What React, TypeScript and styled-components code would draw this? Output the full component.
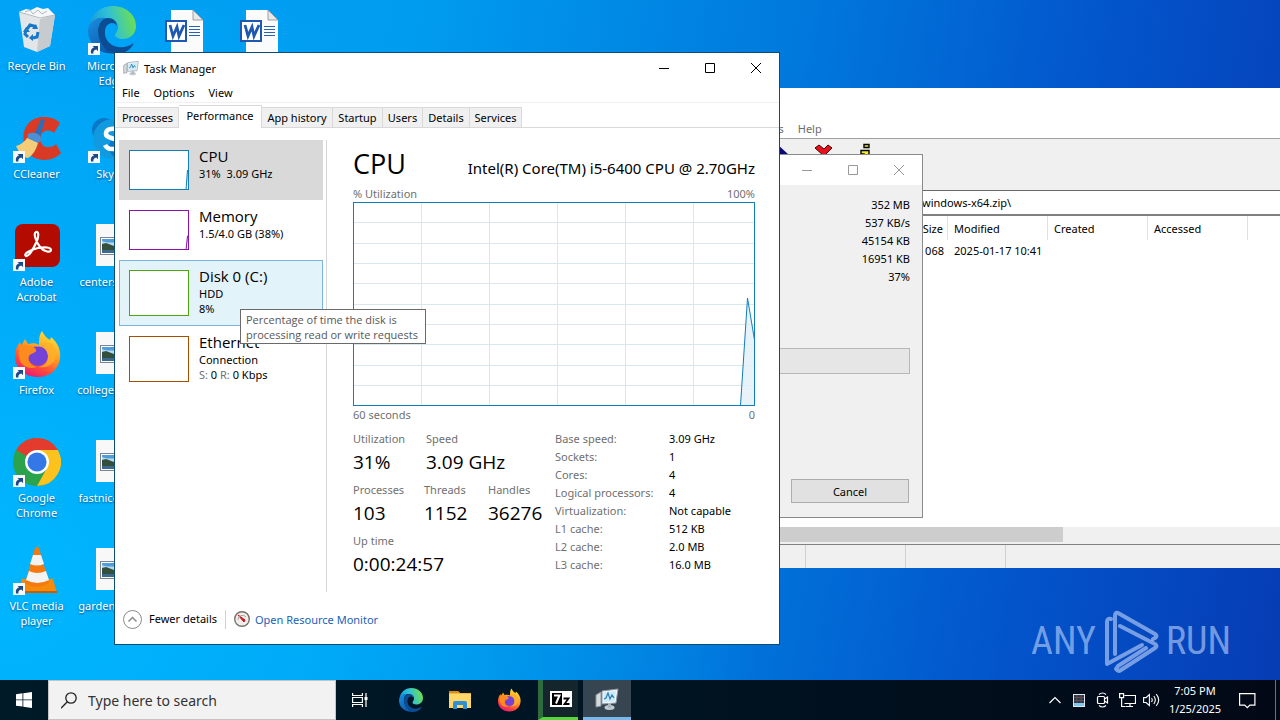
import React from 'react';
import styled, { createGlobalStyle, css } from 'styled-components';

const GlobalStyle = createGlobalStyle`
  * { box-sizing: border-box; }
  body { margin: 0; font-family: "Noto Sans", "Open Sans", sans-serif; font-size: 11px; color: #000; overflow: hidden; }
  button { font: inherit; color: inherit; border: 0; padding: 0; background: none; }
  svg { display: block; flex: none; }
  dl, dd, dt, h1, h2, p, ul { margin: 0; padding: 0; font-weight: 400; }
`;

/* ---------- desktop ---------- */

const Screen = styled.div`
  display: flex;
  flex-direction: column;
  min-height: 100vh;
`;

const Desktop = styled.main`
  position: relative;
  flex: 1;
  background:
    radial-gradient(ellipse 60% 90% at 0% 85%, rgba(0, 184, 255, 0.9), rgba(0, 184, 255, 0) 100%),
    linear-gradient(100deg, #00a2f6 0%, #009cf0 30%, #0078dc 58%, #0354cb 80%, #063cb4 100%);
`;

const IconColumns = styled.div`
  display: flex;
  margin-left: -1px;
`;

const IconColumn = styled.ul`
  display: flex;
  flex-direction: column;
  width: 75px;
  list-style: none;
`;

const ShortcutItem = styled.li`
  display: flex;
  flex-direction: column;
  align-items: center;
  height: 108px;
  padding-top: 6px;
`;

const ShortcutArt = styled.div`
  position: relative;
  height: 52px;
`;

const ShortcutArrow = styled.div`
  position: absolute;
  left: 0;
  bottom: 3px;
`;

const ShortcutLabel = styled.span`
  line-height: 15px;
  text-align: center;
  color: #fff;
  max-width: 74px;
  text-shadow: 0 1px 2px rgba(0, 40, 90, 0.7);
`;

const Watermark = styled.div`
  position: absolute;
  right: 49px;
  bottom: 6px;
  display: flex;
  align-items: center;
  gap: 7px;
  color: rgba(190, 212, 250, 0.62);
  font-family: "Liberation Sans Narrow", "Roboto Condensed", "DejaVu Sans Condensed", sans-serif;
  font-size: 38px;
  line-height: 66px;
`;

/* ---------- windows ---------- */

const TitleBar = styled.header`
  display: flex;
  align-items: center;
  height: 30px;
  background: #fff;
`;

const TitleText = styled.span`
  flex: 1;
  padding-left: 5px;
`;

const CaptionButton = styled.button`
  display: flex;
  align-items: center;
  justify-content: center;
  width: 46px;
  height: 29px;
`;

const CaptionButtons = styled.div<{ $muted?: boolean }>`
  display: flex;
  margin-left: auto;
  color: ${(p) => (p.$muted ? '#999' : '#000')};
`;

const MenuBar = styled.nav<{ $muted?: boolean }>`
  display: flex;
  gap: 14px;
  height: 20px;
  align-items: center;
  color: ${(p) => (p.$muted ? '#6d6d6d' : '#000')};
`;

const ArchiveWindow = styled.section`
  position: absolute;
  left: 740px;
  right: 0;
  top: 88px;
  display: flex;
  flex-direction: column;
  height: 480px;
  background: #fff;
  overflow: hidden;
`;

const ArchiveMenu = styled(MenuBar)`
  padding-left: 17px;
  border-bottom: 1px solid #a0a0a0;
  height: 21px;
`;

const Toolbar = styled.div`
  display: flex;
  gap: 26px;
  height: 51px;
  padding: 4px 0 0 32px;
  background: #f0f0f0;
`;

const AddressBar = styled.div`
  height: 26px;
  padding-left: 182px;
  border-top: 1px solid #696969;
  border-bottom: 2px solid #808080;
  line-height: 24px;
`;

const FileTable = styled.table`
  width: 508px;
  table-layout: fixed;
  border-collapse: separate;
  border-spacing: 0;
  th, td { font-weight: 400; text-align: left; padding: 0 0 0 6px; white-space: nowrap; }
  th { height: 24px; border-right: 1px solid #e0e0e0; }
  td { height: 20px; }
  th:first-child, td:first-child { text-align: right; padding-right: 4px; }
`;

const ScrollTrack = styled.div`
  height: 17px;
  margin-top: auto;
  background: #f0f0f0;
`;

const ScrollThumb = styled.div`
  width: 323px;
  height: 15px;
  background: #cdcdcd;
`;

const StatusBar = styled.footer`
  display: flex;
  height: 24px;
  border-top: 1px solid #808080;
  background: #f0f0f0;
`;

const StatusCell = styled.span<{ $width: number }>`
  width: ${(p) => p.$width}px;
  border-right: 1px solid #d0d0d0;
`;

const ProgressWindow = styled.section`
  position: absolute;
  left: 700px;
  top: 154px;
  display: flex;
  flex-direction: column;
  width: 223px;
  height: 364px;
  border: 1px solid #8a8a8a;
  background: #f0f0f0;
`;

const ProgressValues = styled.ul`
  && { padding: 11px 12px 0 0; }
  list-style: none;
  line-height: 18px;
  text-align: right;
`;

const ProgressTrack = styled.div`
  height: 26px;
  margin: 62px 12px 0 0;
  border: 1px solid #b8b8b8;
  background: #e6e6e6;
`;

const CancelButton = styled.button`
  align-self: flex-end;
  width: 118px;
  height: 24px;
  margin: auto 13px 14px 0;
  border: 1px solid #adadad;
  background: #e1e1e1;
`;

const TaskWindow = styled.section`
  position: absolute;
  left: 114px;
  top: 52px;
  display: flex;
  flex-direction: column;
  width: 666px;
  height: 593px;
  border: 1px solid #0d4c74;
  background: #fff;
`;

const TaskTitle = styled(TitleBar)`
  padding-left: 8px;
`;

const TaskMenu = styled(MenuBar)`
  padding-left: 7px;
  border-bottom: 1px solid #f0f0f0;
`;

const TabStrip = styled.div`
  display: flex;
  align-items: flex-end;
  height: 25px;
  padding-left: 2px;
  border-bottom: 1px solid #d9d9d9;
`;

const Tab = styled.button<{ $width: number; $active?: boolean }>`
  width: ${(p) => p.$width}px;
  height: 20px;
  border: 1px solid #d9d9d9;
  border-left-width: 0;
  border-bottom: 0;
  background: #f0f0f0;
  white-space: nowrap;
  ${(p) => p.$active && css`
    height: 23px;
    margin-bottom: -1px;
    padding-bottom: 3px;
    background: #fff;
  `}
`;

const TaskBody = styled.div`
  display: flex;
  flex: 1;
  padding: 12px 24px 0 4px;
`;

const ResourceList = styled.div`
  width: 208px;
  height: 452px;
  border-right: 1px solid #d6d6d6;
`;

const ResourceItem = styled.button<{ $tall?: boolean; $state?: 'selected' | 'hover' }>`
  display: flex;
  gap: 10px;
  width: 204px;
  height: ${(p) => (p.$tall ? 66 : 60)}px;
  padding: 5px 9px;
  border: 1px solid transparent;
  text-align: left;
  ${(p) => p.$state === 'selected' && css`background: #d9d9d9; border-color: #d9d9d9;`}
  ${(p) => p.$state === 'hover' && css`background: #e3f3fa; border-color: #7ab4e0;`}
`;

const Thumb = styled.svg`
  margin-top: 4px;
  background: #fff;
`;

const ResourceText = styled.span`
  display: flex;
  flex-direction: column;
  line-height: 15px;
  white-space: pre;
`;

const ResourceName = styled.span`
  font-family: "Open Sans", sans-serif;
  font-size: 15px;
  line-height: 20px;
`;

const Muted = styled.span`
  color: #707070;
`;

const Detail = styled.div`
  flex: 1;
  padding-left: 26px;
`;

const DetailHead = styled.div`
  display: flex;
  align-items: baseline;
  justify-content: space-between;
  padding-top: 1px;
`;

const DetailTitle = styled.h1`
  font: 27px/45px "Open Sans", sans-serif;
`;

const DetailModel = styled.h2`
  font-size: 15px;
  line-height: 20px;
`;

const AxisRow = styled.div`
  display: flex;
  justify-content: space-between;
  line-height: 16px;
  color: #707070;
`;

const Chart = styled.svg`
  width: 100%;
  height: 204px;
  margin-bottom: 1px;
`;

const Stats = styled.div`
  display: flex;
  padding-top: 7px;
`;

const StatColumn = styled.div`
  display: flex;
  flex-direction: column;
  width: 202px;
`;

const StatRow = styled.dl`
  display: flex;
  height: 51px;
`;

const Stat = styled.div<{ $width: number }>`
  width: ${(p) => p.$width}px;
  dt { color: #707070; line-height: 18px; }
  dd { font: 19px/28px "Open Sans", sans-serif; white-space: nowrap; }
`;

const Facts = styled.dl`
  display: grid;
  grid-template-columns: 114px auto;
  grid-auto-rows: 18px;
  line-height: 18px;
  dt { color: #707070; }
`;

const TaskFooter = styled.footer`
  display: flex;
  align-items: center;
  height: 50px;
  padding-left: 8px;
`;

const DetailsToggle = styled.button`
  display: flex;
  align-items: center;
  gap: 7px;
  padding-right: 8px;
  margin-right: 8px;
  border-right: 1px solid #d0d0d0;
  line-height: 16px;
`;

const MonitorLink = styled.a`
  display: flex;
  align-items: center;
  gap: 5px;
  color: #1a5fb8;
  text-decoration: none;
`;

const Tooltip = styled.div`
  position: absolute;
  left: 240px;
  top: 309px;
  width: 186px;
  padding: 2px 0 1px 5px;
  border: 1px solid #6a6a6a;
  background: #fff;
  color: #575757;
  font-family: "Open Sans", sans-serif;
  line-height: 15px;
  white-space: pre;
`;

/* ---------- taskbar ---------- */

const Taskbar = styled.footer`
  display: flex;
  height: 40px;
  background: linear-gradient(90deg, #001a28 0%, #001422 50%, #020816 100%);
  color: #fff;
`;

const BarButton = styled.button<{ $open?: boolean }>`
  display: flex;
  align-items: center;
  justify-content: center;
  width: 48px;
  height: 40px;
  margin-right: 1px;
  ${(p) => p.$open && css`
    background: #36454f;
    border-bottom: 3px solid #76b9ed;
  `}
`;

const StartButton = styled(BarButton)`
  margin-right: 0;
`;

const TaskViewButton = styled(BarButton)`
  margin-right: 3px;
`;

const ZipButton = styled(BarButton)`
  width: 40px;
  margin: 0 5px 0 4px;
  border-left: 5px solid #2f6b3c;
  border-bottom: 3px solid #55d83c;
  background: #14262c;
`;

const SearchBox = styled.label`
  display: flex;
  align-items: center;
  gap: 11px;
  width: 288px;
  padding-left: 12px;
  border: 1px solid #c4c4c4;
  background: #f2f2f2;
`;

const SearchInput = styled.input`
  flex: 1;
  min-width: 0;
  border: 0;
  outline: 0;
  padding: 0;
  background: none;
  font: 14px "Noto Sans", sans-serif;
  &::placeholder { color: #333; opacity: 1; }
`;

const Tray = styled.div`
  display: flex;
  align-items: center;
  margin-left: auto;
`;

const TrayButton = styled.button`
  display: flex;
  align-items: center;
  justify-content: center;
  width: 24px;
  height: 40px;
`;

const Clock = styled.time`
  width: 64px;
  line-height: 18px;
  text-align: center;
  white-space: pre-line;
`;

const NoticeButton = styled(TrayButton)`
  width: 40px;
`;

const ShowDesktop = styled.button`
  width: 5px;
  height: 40px;
  margin-left: 8px;
  border-left: 1px solid #6c7480;
`;

/* ---------- drawings ---------- */

const ArrowBadge = () => (
  <svg width="12" height="12" viewBox="0 0 12 12">
    <rect width="12" height="12" fill="#f6f8fb" />
    <path d="M3 10.5C2.4 7.5 3.4 5.3 6 4.6L4.6 3h5.400v5.200L8.400 6.600C6.200 7 5 8.200 5.400 10.500z" fill="#1c4a86" />
  </svg>
);

const BinArt = () => (
  <svg width="48" height="48" viewBox="0 0 48 48">
    <path d="M6 6l36 3-5 31-13 6-13-5z" fill="#e3e6e9" />
    <path d="M27 12l15-3-5 31-13 6z" fill="#c6cbd0" />
    <path d="M6 6l7-3 5 1 6-3 6 2 5-1 7 7-15 4z" fill="#f6f7f8" />
    <path d="M6 6l21 6 15-3M12 6l5-2 3 4 5-4 4 4 5-3" stroke="#b4b9be" fill="none" />
    <g fill="none" stroke="#1877c9" strokeWidth="3">
      <path d="M14 23l3-4 4 1 1 2" /><path d="M25 26l-1 5-4 1" /><path d="M15 31l-3-3 1-4" />
    </g>
    <path d="M19 23h6l-2-5zM20 28v7l-4-3zM10 26l3-5 4 5z" fill="#1877c9" />
  </svg>
);

const EdgeArt = ({ size }: { size: number }) => (
  <svg width={size} height={size} viewBox="0 0 48 48">
    <defs>
      <linearGradient id="edgeTop" x1="0" y1="0.6" x2="1" y2="0.4"><stop offset="0" stopColor="#1599dc" /><stop offset="0.45" stopColor="#2ec0d8" /><stop offset="1" stopColor="#6fe04c" /></linearGradient>
      <linearGradient id="edgeLow" x1="0" y1="0" x2="0.7" y2="1"><stop offset="0" stopColor="#1b8fe0" /><stop offset="1" stopColor="#0b56a8" /></linearGradient>
    </defs>
    <path d="M1 22C2 9 12 0 25 0c13 0 23 9 23 20 0 8-6 13-13 13-5 0-8-2-8-4 0-2 3-3 3-8 0-5-5-9-12-9C9 12 3 16 1 22z" fill="url(#edgeTop)" />
    <path d="M0 24c1-8 8-13 17-12-5 2-7 7-7 12 0 9 6 20 18 23C13 50 0 39 0 24z" fill="url(#edgeLow)" />
    <path d="M17 25c-1 8 5 15 13 16 6 1 11-1 14-3 1-1 2 0 1 1-4 6-10 9-18 9C17 46 10 35 10 25c0-7 4-13 10-13 5 0 9 3 9 8-1-2-3-3-5-3-4 0-7 4-7 8z" fill="#0c4c93" />
  </svg>
);

const WordArt = () => (
  <svg width="48" height="48" viewBox="0 0 48 48">
    <path d="M8 4h22l10 10v34H8z" fill="#fbfbfb" />
    <path d="M30 4v10h10z" fill="#e8e8e8" stroke="#8a8a8a" strokeWidth="0.800" />
    <g stroke="#2b62b0" strokeWidth="1.200"><path d="M26 20.500h11M26 23.500h11M26 26.500h11M26 29.500h11" /></g>
    <rect x="3" y="15" width="20" height="20" fill="#fff" stroke="#1f58b0" strokeWidth="2" />
    <path d="M7 19l3 11 4-9 2 9 5-11" fill="none" stroke="#1f58b0" strokeWidth="2.800" />
  </svg>
);

const CCleanerArt = () => (
  <svg width="48" height="48" viewBox="0 0 48 48">
    <path d="M47 9l-6 10c-4-4-11-3-13 2-2 6 1 13 8 12 3 0 5-1 7-3l5 9C39 49 20 48 14 37 5 20 14 3 30 3c8 0 13 2 17 6z" fill="#d93a26" />
    <path d="M28 5l4 1-5 17-6-2z" fill="#2f6db4" />
    <path d="M15 20c6-3 14 0 13 7l-5 3-9-4z" fill="#4b8fd4" />
    <path d="M3 32c5-1 9-5 11-8l11 5c-2 7-5 12-10 15C9 43 6 38 3 32z" fill="#f5cd78" />
  </svg>
);

const SkypeArt = () => (
  <svg width="48" height="48" viewBox="0 0 48 48">
    <circle cx="16" cy="16" r="12" fill="#0a78c8" /><circle cx="25" cy="25" r="20" fill="#129ae0" /><circle cx="33" cy="33" r="12" fill="#0a78c8" />
    <path d="M32 18c-2-4-13-5-14 1-1 7 14 4 14 11 0 6-12 7-15 1" fill="none" stroke="#fff" strokeWidth="4.500" />
  </svg>
);

const AcrobatArt = () => (
  <svg width="48" height="48" viewBox="0 0 48 48">
    <rect x="2" y="2" width="45" height="43" rx="8" fill="#b30b00" />
    <path d="M23 10c3-1 3 5 0 11-3 7-8 14-10 13-3-2 4-6 12-8 7-1 13-1 13 2 0 3-7 2-11-3-4-5-7-14-4-15z" fill="none" stroke="#fff" strokeWidth="2.200" />
  </svg>
);

const FirefoxArt = ({ size }: { size: number }) => (
  <svg width={size} height={size} viewBox="0 0 48 48">
    <defs>
      <linearGradient id="fox" x1="0.8" y1="0" x2="0.3" y2="1"><stop offset="0" stopColor="#ffe83a" /><stop offset="0.45" stopColor="#ff9a22" /><stop offset="0.75" stopColor="#ff4a3a" /><stop offset="1" stopColor="#e5187a" /></linearGradient>
    </defs>
    <path d="M29 1c2 4 4 7 8 9l1-3c7 6 10 13 9 21-1 11-10 19-22 19C11 47 2 38 2 26c0-6 2-10 5-14l1 4 4-7 3 5c5-1 8-1 11 1 0-5 0-10 3-14z" fill="url(#fox)" />
    <circle cx="25" cy="26" r="10" fill="#7542d8" />
    <path d="M7 14c3 2 7 1 11 2 3 1 6 3 5 5-1 2-5 2-7 5-2 5 2 10 8 11-8 3-16-1-18-9-1-6 0-10 1-14z" fill="#ff8a1e" />
    <path d="M22 17c6-2 12 1 13 8 1 7-4 12-10 12 11 2 19-5 18-15C41 13 33 9 26 15z" fill="#ffb02a" opacity="0.8" />
  </svg>
);

const ChromeArt = () => (
  <svg width="48" height="48" viewBox="0 0 48 48">
    <circle cx="24" cy="24" r="24" fill="#2ba24c" />
    <path d="M24 24L3.200 12A24 24 0 0 1 44.800 12z" fill="#e33b2e" />
    <path d="M24 12h20.800A24 24 0 0 1 24 48l10-18z" fill="#fcc31e" />
    <circle cx="24" cy="24" r="12" fill="#fff" /><circle cx="24" cy="24" r="9.600" fill="#3478e8" />
  </svg>
);

const VlcArt = () => (
  <svg width="48" height="48" viewBox="0 0 48 48">
    <path d="M9 33h31l4 14H5z" fill="#f58a0b" /><path d="M5 45h39v2H5z" fill="#c85d05" />
    <path d="M22 2q2-2 4 0l10 35q-12 8-24 0z" fill="#f47a10" />
    <path d="M20 9h8l3 9q-7 3-14 0zM16 25q8 4 17 0l3 9q-12 6-23 0z" fill="#f3f3f3" />
  </svg>
);

const PhotoArt = () => (
  <svg width="48" height="48" viewBox="0 0 48 48">
    <path d="M8 2h32v42H8z" fill="#f8f8f8" />
    <rect x="12.500" y="15.500" width="23" height="17" fill="#fff" stroke="#7b8490" />
    <path d="M14 17h20v14H14z" fill="#4f9ddb" /><path d="M14 19c5 2 12 2 20 0v5H14z" fill="#b8d8ee" />
    <path d="M14 22l4-1 16 6v3H14z" fill="#34503a" /><path d="M14 28h20v3H14z" fill="#3b6a90" />
  </svg>
);

const MonitorArt = ({ size }: { size: number }) => (
  <svg width={size} height={size} viewBox="0 0 24 24">
    <path d="M1 8l5-3v14l-5 1z" fill="#d4dade" stroke="#8d979f" />
    <path d="M7 4l16-2-2 14-14 1z" fill="#f3f7fa" stroke="#8c98a4" />
    <path d="M8.500 5.500l12.500-1.500-1.500 10.500-11 1z" fill="#cfeaf8" />
    <path d="M9 12l2-1 2-5 2 6 2-4 2 3" fill="none" stroke="#267eb8" strokeWidth="1.200" />
    <ellipse cx="14.500" cy="20.500" rx="5" ry="2.500" fill="#c3cbd1" /><path d="M13 16h3v5h-3z" fill="#aab4bc" />
  </svg>
);

const CaptionSet = ({ muted }: { muted?: boolean }) => (
  <CaptionButtons $muted={muted}>
    <CaptionButton aria-label="Minimize"><svg width="10" height="10" stroke="currentColor"><path d="M0 5.500h10" /></svg></CaptionButton>
    <CaptionButton aria-label="Maximize"><svg width="10" height="10" fill="none" stroke="currentColor"><path d="M.5.500h9v9h-9z" /></svg></CaptionButton>
    <CaptionButton aria-label="Close"><svg width="10" height="10" stroke="currentColor"><path d="M0 0l10 10M10 0L0 10" /></svg></CaptionButton>
  </CaptionButtons>
);

/* ---------- data ---------- */

type Shortcut = { label: string; art: React.ReactNode; linked?: boolean };

const columns: Shortcut[][] = [
  [
    { label: 'Recycle Bin', art: <BinArt /> },
    { label: 'CCleaner', art: <CCleanerArt />, linked: true },
    { label: 'Adobe Acrobat', art: <AcrobatArt />, linked: true },
    { label: 'Firefox', art: <FirefoxArt size={48} />, linked: true },
    { label: 'Google Chrome', art: <ChromeArt />, linked: true },
    { label: 'VLC media player', art: <VlcArt />, linked: true },
  ],
  [
    { label: 'Microsoft Edge', art: <EdgeArt size={48} />, linked: true },
    { label: 'Skype', art: <SkypeArt />, linked: true },
    { label: 'centers1.jpg', art: <PhotoArt /> },
    { label: 'college11.jpg', art: <PhotoArt /> },
    { label: 'fastnice1.jpg', art: <PhotoArt /> },
    { label: 'garden1.png', art: <PhotoArt /> },
  ],
  [{ label: '', art: <WordArt /> }],
  [{ label: '', art: <WordArt /> }],
];

const tabs: [string, number][] = [
  ['Processes', 62], ['Performance', 83], ['App history', 71], ['Startup', 50],
  ['Users', 40], ['Details', 47], ['Services', 52],
];

const facts = [
  ['Base speed:', '3.09 GHz'], ['Sockets:', '1'], ['Cores:', '4'], ['Logical processors:', '4'],
  ['Virtualization:', 'Not capable'], ['L1 cache:', '512 KB'], ['L2 cache:', '2.0 MB'], ['L3 cache:', '16.0 MB'],
];

const stats: [string, string, number][][] = [
  [['Utilization', '31%', 73], ['Speed', '3.09 GHz', 120]],
  [['Processes', '103', 71], ['Threads', '1152', 64], ['Handles', '36276', 64]],
  [['Up time', '0:00:24:57', 190]],
];

const UsageThumb = ({ color, height = 40, path }: { color: string; height?: number; path?: string }) => (
  <Thumb width="60" height={height}>
    {path && <path d={path} fill={color} fillOpacity="0.25" stroke={color} />}
    <rect x="0.500" y="0.500" width="59" height={height - 1} fill="none" stroke={color} />
  </Thumb>
);

/* ---------- page ---------- */

export default function App() {
  return (
    <Screen>
      <GlobalStyle />
      <Desktop>
        <IconColumns>
          {columns.map((items, c) => (
            <IconColumn key={c}>
              {items.map((s, i) => (
                <ShortcutItem key={i}>
                  <ShortcutArt>
                    {s.art}
                    {s.linked && <ShortcutArrow><ArrowBadge /></ShortcutArrow>}
                  </ShortcutArt>
                  <ShortcutLabel>{s.label}</ShortcutLabel>
                </ShortcutItem>
              ))}
            </IconColumn>
          ))}
        </IconColumns>

        <Watermark>
          <span>ANY</span>
          <svg width="56" height="63" viewBox="0 0 56 63" fill="none" stroke="currentColor" strokeWidth="4" strokeLinejoin="round" strokeLinecap="round">
            <path d="M8 9q-4-1-4 3v42l35-19" />
            <path d="M12 44V6q0-4 3-3l37 21q3 2 0 4l-2 1" />
            <path d="M17 16l35 18q3 2 0 4L18 60q-3 2-5-1l2-3 28-18" />
          </svg>
          <span>RUN</span>
        </Watermark>

        <ArchiveWindow>
          <TitleBar />
          <ArchiveMenu $muted><button>Tools</button><button>Help</button></ArchiveMenu>
          <Toolbar>
            <svg width="17" height="16"><path d="M5 1l12 11H5z" fill="#0a0a78" /></svg>
            <svg width="18" height="16"><path d="M0 5l4-3 5 4 4-4 4 3-8 8z" fill="#e8101c" stroke="#400" /></svg>
            <svg width="12" height="16"><path d="M5 1.500h5v3H5zM2 7.500h8V15H5v-4H2z" fill="#f0ee20" stroke="#000" strokeWidth="1.400" /></svg>
          </Toolbar>
          <AddressBar>windows-x64.zip\</AddressBar>
          <FileTable>
            <colgroup><col width="208" /><col width="100" /><col width="100" /><col width="100" /></colgroup>
            <thead><tr><th>Size</th><th>Modified</th><th>Created</th><th>Accessed</th></tr></thead>
            <tbody><tr><td>068</td><td>2025-01-17 10:41</td><td /><td /></tr></tbody>
          </FileTable>
          <ScrollTrack><ScrollThumb /></ScrollTrack>
          <StatusBar><StatusCell $width={66} /><StatusCell $width={100} /><StatusCell $width={100} /></StatusBar>
        </ArchiveWindow>

        <ProgressWindow>
          <TitleBar><CaptionSet muted /></TitleBar>
          <ProgressValues>
            {['352 MB', '537 KB/s', '45154 KB', '16951 KB', '37%'].map((v) => <li key={v}>{v}</li>)}
          </ProgressValues>
          <ProgressTrack />
          <CancelButton>Cancel</CancelButton>
        </ProgressWindow>

        <TaskWindow>
          <TaskTitle>
            <MonitorArt size={16} />
            <TitleText>Task Manager</TitleText>
            <CaptionSet />
          </TaskTitle>
          <TaskMenu><button>File</button><button>Options</button><button>View</button></TaskMenu>
          <TabStrip>
            {tabs.map(([name, width], i) => <Tab key={name} $width={width} $active={i === 1}>{name}</Tab>)}
          </TabStrip>
          <TaskBody>
            <ResourceList>
              <ResourceItem $state="selected">
                <UsageThumb color="#117dbb" path="M57 40l1.500-20 1.500 5" />
                <ResourceText><ResourceName>CPU</ResourceName><span>31%  3.09 GHz</span></ResourceText>
              </ResourceItem>
              <ResourceItem>
                <UsageThumb color="#8b12ae" path="M57 40l1.500-14 1.500-1" />
                <ResourceText><ResourceName>Memory</ResourceName><span>1.5/4.0 GB (38%)</span></ResourceText>
              </ResourceItem>
              <ResourceItem $tall $state="hover">
                <UsageThumb color="#4da60c" height={46} />
                <ResourceText><ResourceName>Disk 0 (C:)</ResourceName><span>HDD</span><span>8%</span></ResourceText>
              </ResourceItem>
              <ResourceItem $tall>
                <UsageThumb color="#a74f01" height={46} />
                <ResourceText>
                  <ResourceName>Ethernet</ResourceName><span>Connection</span>
                  <span><Muted>S:</Muted> 0 <Muted>R:</Muted> 0 Kbps</span>
                </ResourceText>
              </ResourceItem>
            </ResourceList>
            <Detail>
              <DetailHead>
                <DetailTitle>CPU</DetailTitle>
                <DetailModel>Intel(R) Core(TM) i5-6400 CPU @ 2.70GHz</DetailModel>
              </DetailHead>
              <AxisRow><span>% Utilization</span><span>100%</span></AxisRow>
              <Chart viewBox="0 0 402 204" preserveAspectRatio="none">
                <g stroke="#d9e8f0">
                  {[68, 136, 204, 272, 340].map((x) => <path key={x} d={`M${x + 0.5} 0v204`} />)}
                  {[20, 41, 61, 81, 102, 122, 142, 163, 183].map((y) => <path key={y} d={`M0 ${y + 0.5}h402`} />)}
                </g>
                <path d="M387.500 203.500L394.500 96l7 42v65.500z" fill="#e2f0f8" fillOpacity="0.8" stroke="#117dbb" />
                <rect x="0.500" y="0.500" width="401" height="203" fill="none" stroke="#117dbb" />
              </Chart>
              <AxisRow><span>60 seconds</span><span>0</span></AxisRow>
              <Stats>
                <StatColumn>
                  {stats.map((row, i) => (
                    <StatRow key={i}>
                      {row.map(([k, v, w]) => <Stat key={k} $width={w}><dt>{k}</dt><dd>{v}</dd></Stat>)}
                    </StatRow>
                  ))}
                </StatColumn>
                <Facts>
                  {facts.map(([k, v]) => <React.Fragment key={k}><dt>{k}</dt><dd>{v}</dd></React.Fragment>)}
                </Facts>
              </Stats>
            </Detail>
          </TaskBody>
          <TaskFooter>
            <DetailsToggle>
              <svg width="19" height="19" fill="none" stroke="#8a8a8a"><circle cx="9.500" cy="9.500" r="9" /><path d="M5.500 11.500l4-4 4 4" strokeWidth="1.500" /></svg>
              Fewer details
            </DetailsToggle>
            <MonitorLink href="#resource-monitor">
              <svg width="16" height="16"><circle cx="8" cy="8" r="7.300" fill="#f1efec" stroke="#77706a" strokeWidth="1.400" /><path d="M4 4l6 7 1-2z" fill="#c8141c" stroke="#c8141c" /><path d="M4 9a4.500 4.500 0 0 1 8-3" fill="none" stroke="#a9a29c" /></svg>
              Open Resource Monitor
            </MonitorLink>
          </TaskFooter>
        </TaskWindow>

        <Tooltip role="tooltip">{'Percentage of time the disk is\nprocessing read or write requests'}</Tooltip>
      </Desktop>

      <Taskbar>
        <StartButton aria-label="Start">
          <svg width="16" height="16" fill="#fff"><path d="M0 2.200l6.500-.9v6.200H0zM7.300 1.200L16 0v7.500H7.300zM0 8.300h6.500v6.300L0 13.700zM7.300 8.300H16V16l-8.700-1.200z" /></svg>
        </StartButton>
        <SearchBox>
          <svg width="16" height="17" fill="none" stroke="#222" strokeWidth="1.300"><circle cx="10" cy="6" r="5.200" /><path d="M6.300 9.700L0 16.200" /></svg>
          <SearchInput placeholder="Type here to search" aria-label="Search" />
        </SearchBox>
        <TaskViewButton aria-label="Task view">
          <svg width="16" height="16" fill="none" stroke="#fff" strokeWidth="1.200"><path d="M.6 1v2.500h9.800V1M.6 5.500h9.800v5H.6zM.6 15v-2.500h9.800V15M14 1v14" /><path d="M12.500 5h3v3h-3z" fill="#fff" stroke="none" /></svg>
        </TaskViewButton>
        <BarButton aria-label="Edge"><EdgeArt size={24} /></BarButton>
        <BarButton aria-label="File Explorer">
          <svg width="22" height="20"><path d="M0 1h9l2 2h11v15H0z" fill="#f0b840" /><path d="M0 4h22v14H0z" fill="#ffd768" /><path d="M4 19v-6q0-2 2-2h10q2 0 2 2v6h-4v-4H8v4z" fill="#2f8fd6" /><path d="M0 1h9l2 2H0z" fill="#d88a1a" /></svg>
        </BarButton>
        <BarButton aria-label="Firefox"><FirefoxArt size={24} /></BarButton>
        <ZipButton aria-label="7-Zip">
          <svg width="22" height="16"><rect width="22" height="16" fill="#fff" /><rect x="2" y="2" width="10" height="12" fill="#000" /><path d="M4 4.500h5.500L6 12.500" fill="none" stroke="#fff" strokeWidth="2" /><path d="M13.500 7.500h5L14.500 13h5" fill="none" stroke="#000" strokeWidth="1.800" /></svg>
        </ZipButton>
        <BarButton $open aria-label="Task Manager"><MonitorArt size={24} /></BarButton>
        <Tray>
          <TrayButton aria-label="Show hidden icons"><svg width="12" height="8" fill="none" stroke="#fff" strokeWidth="1.200"><path d="M.5 7L6 1.500 11.500 7" /></svg></TrayButton>
          <TrayButton aria-label="CPU meter">
            <svg width="12" height="13"><rect width="12" height="13" fill="#dfe8ee" /><path d="M1 1h10v8H1z" fill="#27384c" /><path d="M1 9h10v3H1z" fill="#7cc8f0" /><path d="M1 3.500h10M1 6.500h10M4 1v8M8 1v8" stroke="#6b4a48" /></svg>
          </TrayButton>
          <TrayButton aria-label="Camera">
            <svg width="14" height="16" fill="none" stroke="#fff" strokeWidth="1.200"><rect x="1.500" y="4.500" width="7" height="7" rx="1" /><path d="M8.500 7l3-2v6l-3-2M3 2.500Q6.500-.5 10 2.500M3 13.500q3.500 3 7 0" /></svg>
          </TrayButton>
          <TrayButton aria-label="Network">
            <svg width="17" height="15" fill="none" stroke="#fff" strokeWidth="1.200"><path d="M5.500 2.500h11v8h-11M11 10.500v3M7 13.500h7M.6.600h4v4h-4zM2.600 5v8.500h4" /></svg>
          </TrayButton>
          <TrayButton aria-label="Volume">
            <svg width="17" height="14" fill="none" stroke="#fff" strokeWidth="1.100"><path d="M.6 4.600H3L6.400 1.500v11L3 9.500H.6zM8.500 5q1.500 2 0 4M10.800 3q3 4 0 8M13.200 1.200q5 5.800 0 11.600" /></svg>
          </TrayButton>
          <Clock>{'7:05 PM\n1/25/2025'}</Clock>
          <NoticeButton aria-label="Notifications">
            <svg width="17" height="17" fill="none" stroke="#fff" strokeWidth="1.200"><path d="M.6 1.600h15.300v11.500h-5l-2.600 2.600-2.600-2.600H.6z" /></svg>
          </NoticeButton>
          <ShowDesktop aria-label="Show desktop" />
        </Tray>
      </Taskbar>
    </Screen>
  );
}
